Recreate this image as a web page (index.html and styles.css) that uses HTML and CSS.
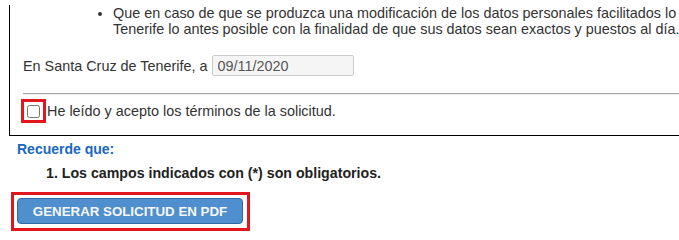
FILE: index.html
```html
<!DOCTYPE html>
<html lang="es">
<head>
<meta charset="utf-8">
<title>Solicitud</title>
<link rel="stylesheet" href="styles.css">
</head>
<body>
<div class="panel">
  <ul class="notes">
    <li>Que en caso de que se produzca una modificación de los datos personales facilitados lo<br>Tenerife lo antes posible con la finalidad de que sus datos sean exactos y puestos al día.</li>
  </ul>
  <div class="date-row">
    <span>En Santa Cruz de Tenerife, a</span>
    <input class="date-input" type="text" value="09/11/2020" readonly>
  </div>
  <hr class="sep">
  <label class="accept-row">
    <span class="highlight"><input type="checkbox" class="check"></span>
    <span>He leído y acepto los términos de la solicitud.</span>
  </label>
</div>
<p class="remember">Recuerde que:</p>
<p class="rule">1. Los campos indicados con (*) son obligatorios.</p>
<div class="btn-frame">
  <button class="btn" type="button">GENERAR SOLICITUD EN PDF</button>
</div>
</body>
</html>
```
FILE: styles.css
```css
html, body {
  margin: 0;
  padding: 0;
  overflow: hidden;
  background: #fff;
  font-family: "Liberation Sans", Arial, sans-serif;
}
.panel {
  margin-left: 9px;
  width: 1000px;
  border: 1px solid #000;
  border-top: 0;
  padding-bottom: 12px;
  color: #333;
  font-size: 14.4px;
}
.notes {
  margin: 5px 0 0;
  padding-left: 103px;
  line-height: 16px;
  white-space: nowrap;
}
.date-row {
  display: flex;
  align-items: center;
  gap: 4px;
  margin-top: 18px;
  padding-left: 13px;
  height: 21px;
}
.date-input {
  box-sizing: border-box;
  width: 142px;
  height: 21px;
  border: 1px solid #ccc;
  border-radius: 2px;
  background: #f5f5f5;
  color: #555;
  font-family: "Liberation Sans", Arial, sans-serif;
  font-size: 14.4px;
  padding: 0 5px;
  margin: 0;
}
.sep {
  margin: 17px 0 0 13px;
  height: 0;
  border: 0;
  border-top: 1px solid #a6a6a6;
  border-bottom: 1px solid #ececec;
}
.accept-row {
  display: flex;
  align-items: center;
  gap: 1px;
  margin: 4px 0 0 11px;
}
.highlight {
  display: flex;
  border: 3px solid #e3161e;
  padding: 3px 3px 2px 3px;
}
.check {
  margin: 0;
  width: 13px;
  height: 13px;
}
.remember {
  margin: 6px 0 0 17px;
  font-size: 14px;
  line-height: 15px;
  font-weight: bold;
  color: #1a66c2;
}
.rule {
  margin: 8px 0 0 46px;
  font-size: 14.2px;
  line-height: 16px;
  font-weight: bold;
  color: #222;
}
.btn-frame {
  display: inline-flex;
  margin: 11px 0 0 11px;
  border: 3px solid #e3161e;
  padding: 3px 4px 4px 3px;
}
.btn {
  box-sizing: border-box;
  width: 226px;
  height: 26px;
  border: 1px solid #2f6aa3;
  border-radius: 4px;
  background: #4f8fcd;
  color: #f7f7f7;
  font-family: "Liberation Sans", Arial, sans-serif;
  font-size: 13.3px;
  font-weight: bold;
  padding: 0;
  margin: 0;
}
```
